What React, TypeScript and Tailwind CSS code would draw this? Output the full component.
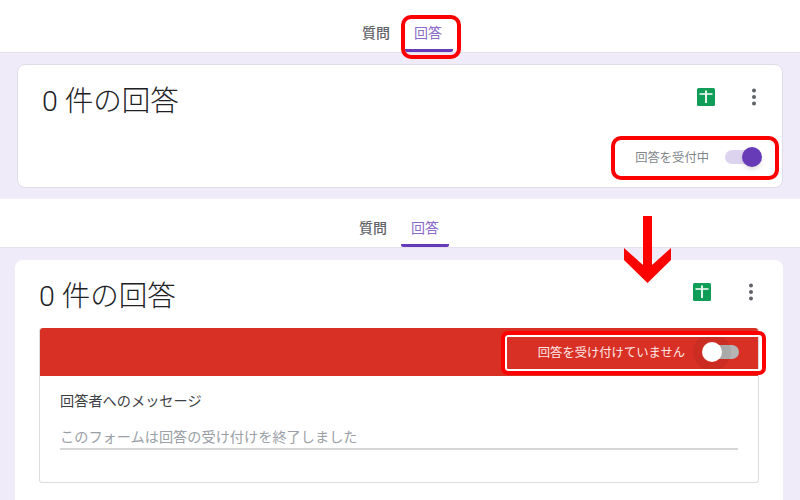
const FONT = "font-['Roboto','Noto_Sans_CJK_JP',sans-serif]"

function SheetsIcon() {
  return (
    <svg width="18" height="18" viewBox="0 0 18 18" className="shrink-0">
      <rect width="18" height="18" rx="1.5" fill="#0f9d58" />
      <path d="M2.5 5.2h13v1.6H9.9V15H8.1V6.8H2.5z" fill="#fff" />
      <path d="M8.1 2.5h1.8v3H8.1z" fill="#fff" />
    </svg>
  )
}

function MoreIcon() {
  return (
    <svg width="6" height="18" viewBox="0 0 6 18" className="shrink-0">
      <circle cx="3" cy="2.5" r="2" fill="#5f6368" />
      <circle cx="3" cy="9" r="2" fill="#5f6368" />
      <circle cx="3" cy="15.5" r="2" fill="#5f6368" />
    </svg>
  )
}

function Tabs({ height, shift, textShift }: { height: string; shift: string; textShift: string }) {
  return (
    <div className={`flex justify-center items-end bg-white ${height}`}>
      <div className={`flex items-end ${shift}`}>
        <div className={`w-[56px] h-[40px] flex items-center justify-center text-[14px] text-[#5f6368] font-medium pt-[3px] ${textShift}`}>質問</div>
        <div className={`w-[48px] h-[40px] flex items-center justify-center text-[14px] text-[#8a6bc9] border-b-[3px] border-[#673ab7] rounded-b-[2px] pt-[5px] ${textShift}`}>回答</div>
      </div>
    </div>
  )
}

export default function App() {
  return (
    <div className={`relative w-[800px] h-[500px] overflow-hidden bg-white ${FONT}`}>
      {/* accepting responses */}
      <Tabs height="h-[52px]" shift="translate-x-[1px]" textShift="pr-[2px]" />
      <div className="h-[147px] bg-[#f0ebf8] border-t border-[#e4e0ee] pt-[11px] pl-[17px] pr-[17px]">
        <div className="h-[124px] bg-white rounded-[8px] border border-[#e0dcea] pl-[24px] pr-[23px] pt-[16px] flex flex-col">
          <div className="flex items-center justify-between">
            <h1 className="text-[28.5px] leading-[42px] text-[#202124] font-light">0 件の回答</h1>
            <div className="flex items-center gap-[36px] pr-[2px] mt-[-10px]">
              <SheetsIcon />
              <MoreIcon />
            </div>
          </div>
          <div className="flex items-center justify-end gap-[16px] mt-[24px] mr-[-2px]">
            <span className="text-[12.3px] text-[#80868b] pt-[2px]">回答を受付中</span>
            <div className="relative w-[36px] h-[14px] rounded-full bg-[#dcd3ee]">
              <div className="absolute right-[-1px] top-[-3px] w-[20px] h-[20px] rounded-full bg-[#673ab7] shadow-md" />
            </div>
          </div>
        </div>
      </div>

      {/* closed */}
      <Tabs height="h-[48px]" shift="translate-x-[-3px]" textShift="" />
      <div className="h-[253px] bg-[#f0ebf8] border-t border-[#e4e0ee] pt-[12px] pl-[15px] pr-[17px]">
        <div className="h-[260px] bg-white rounded-[8px] pl-[24px] pr-[24px] pt-[15px]">
          <div className="flex items-center justify-between h-[41px]">
            <h1 className="text-[28.5px] leading-[42px] text-[#202124] font-light pt-[3px]">0 件の回答</h1>
            <div className="flex items-center gap-[36px] pr-[5px] mt-[-8px]">
              <div className="mr-[1px] flex"><SheetsIcon /></div>
              <MoreIcon />
            </div>
          </div>
          <div className="mt-[12px] rounded-[3px] border border-[#dadce0] border-t-0">
            <div className="h-[48px] bg-[#d93025] rounded-t-[3px] flex items-center justify-end pr-[19px] gap-[16px]">
              <span className="text-[12.3px] text-[#fce8e6] pt-[2px] mr-[2px]">回答を受け付けていません</span>
              <div className="relative w-[36px] h-[14px] rounded-full bg-[#b5b5b5]">
                <div className="absolute left-[-1px] top-[-3px] w-[20px] h-[20px] rounded-full bg-white shadow-[0_0_0_9px_rgba(0,0,0,0.06)]" />
              </div>
            </div>
            <div className="h-[106px] px-[20px] pt-[14px]">
              <div className="text-[14.2px] leading-[22px] text-[#3c4043]">回答者へのメッセージ</div>
              <div className="mt-[14px] h-[24px] text-[14.2px] leading-[22px] text-[#9aa0a6] border-b-2 border-[#d5d6d8]">このフォームは回答の受け付けを終了しました</div>
            </div>
          </div>
        </div>
      </div>

      {/* annotations */}
      <div className="absolute left-[401px] top-[15px] w-[60px] h-[44px] rounded-[10px] border-4 border-[#ff0000]" />
      <div className="absolute left-[611px] top-[136px] w-[168px] h-[44px] rounded-[10px] border-4 border-[#ff0000]" />
      <div className="absolute left-[501px] top-[331px] w-[265px] h-[44px] rounded-[7px] border-4 border-[#ff0000] shadow-[inset_0_0_0_2px_#fff]" />
      <svg width="48" height="68" viewBox="0 0 48 68" className="absolute left-[624px] top-[216px]">
        <path d="M19 0h9v49L47 32v12L23.5 67 0 44V32L19 49z" fill="#ff0000" />
      </svg>
    </div>
  )
}
